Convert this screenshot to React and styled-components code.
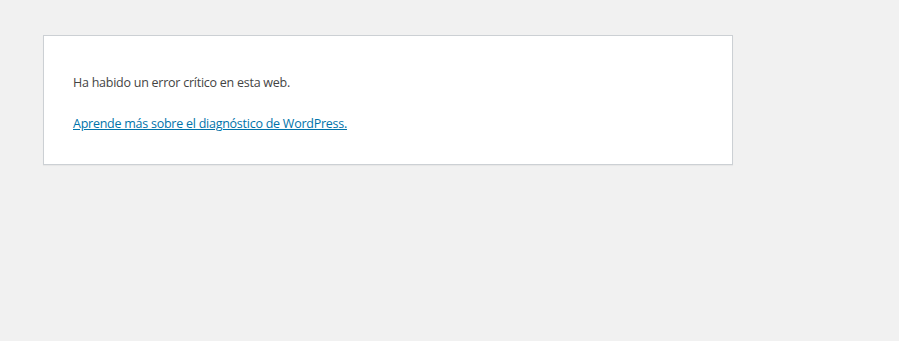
import React from "react";
import styled, { createGlobalStyle } from "styled-components";

const GlobalStyle = createGlobalStyle`
  html, body {
    margin: 0;
    background: #f1f1f1;
  }
`;

const Page = styled.div`
  padding: 35px 0 0 43px;
  min-height: 100vh;
  box-sizing: border-box;
`;

const ErrorBox = styled.div`
  width: 690px;
  height: 130px;
  box-sizing: border-box;
  background: #fff;
  border: 1px solid #ccd0d4;
  box-shadow: 0 1px 1px rgba(0, 0, 0, 0.04);
  padding: 37px 29px 0;
  color: #444;
  font-family: "Open Sans", "Noto Sans", sans-serif;
  font-size: 12.5px;
  letter-spacing: -0.25px;
`;

const Message = styled.p`
  margin: 0 0 ${(props) => props.gap || 0}px;
  line-height: 20px;
`;

const Link = styled.a`
  color: #0073aa;
  text-decoration: underline;
`;

const App = () => {
  return (
    <>
      <GlobalStyle />
      <Page>
        <ErrorBox>
          <Message gap={21}>Ha habido un error crítico en esta web.</Message>
          <Message>
            <Link href="#">Aprende más sobre el diagnóstico de WordPress.</Link>
          </Message>
        </ErrorBox>
      </Page>
    </>
  );
};

export default App;
